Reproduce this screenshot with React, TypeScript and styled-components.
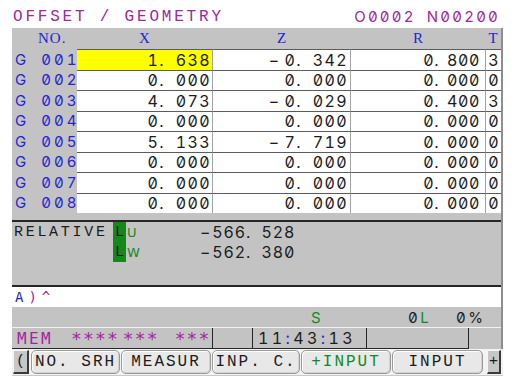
import styled, { createGlobalStyle, css } from "styled-components";

const GlobalStyle = createGlobalStyle`
  html, body {
    margin: 0;
    padding: 0;
    background: #ffffff;
  }
`;

const grey = "#c3c3c3";
const edge = "#8e8e8e";
const magenta = "#a3259f";
const blue = "#2424d6";
const green = "#14891a";
const ink = "#1c1c1c";
const rule = "#262626";

// FANUC style figures: tabular, slashed zero
const figures = css`
  font-family: Inter, "DejaVu Sans", sans-serif;
  font-feature-settings: "zero" 1, "tnum" 1;
  font-weight: 400;
`;

const Screen = styled.div`
  width: 512px;
  height: 383px;
  padding-left: 12px;
  box-sizing: border-box;
  background: #fff;
  overflow: hidden;
`;

const TitleBar = styled.div`
  width: 491px;
  height: 28px;
  padding: 9px 3px 0 1px;
  box-sizing: border-box;
  display: flex;
  justify-content: space-between;
`;

const Title = styled.span<{ $spacing: number; $figures?: boolean }>`
  font-family: "Liberation Mono", monospace;
  font-size: 16px;
  line-height: 16px;
  letter-spacing: ${(p) => p.$spacing}px;
  color: ${magenta};
  white-space: pre;
  ${(p) =>
    p.$figures &&
    css`
      ${figures}
      font-size: 15px;
      word-spacing: 5px;
    `}
`;

const Frame = styled.div`
  width: 491px;
  border-right: 2px solid ${edge};
  box-sizing: border-box;
`;

const Panel = styled(Frame)`
  background: ${grey};
`;

const OffsetGrid = styled.div`
  display: grid;
  grid-template-columns: 65px 136px 138px 135px 15px;
  grid-template-rows: 21px repeat(8, 20.5px);
`;

const HeadCell = styled.div<{ $pad?: number }>`
  font-family: "Liberation Serif", serif;
  font-size: 15px;
  letter-spacing: 1px;
  color: ${blue};
  display: flex;
  align-items: center;
  justify-content: ${(p) => (p.$pad !== undefined ? "flex-start" : "center")};
  padding-left: ${(p) => p.$pad ?? 0}px;
`;

const RowLabel = styled.div`
  display: flex;
  align-items: center;
  padding-left: 3px;
  ${figures}
  font-size: 15px;
  color: ${blue};
`;

const LabelNo = styled.span`
  margin-left: 15px;
  font-size: 15px;
  letter-spacing: 3px;
`;

const ValueCell = styled.div<{
  $hot?: boolean;
  $pad: number;
  $spacing: number;
  $gap: number;
  $tight?: boolean;
}>`
  background: ${(p) => (p.$hot ? "#ffff00" : "#ffffff")};
  border-top: 1px solid #5c5c5c;
  border-right: ${(p) => (p.$tight ? "none" : "1px solid #a2a2a2")};
  box-sizing: border-box;
  display: flex;
  align-items: center;
  justify-content: ${(p) => (p.$tight ? "center" : "flex-end")};
  padding-right: ${(p) => p.$pad}px;
  ${figures}
  font-size: 16px;
  letter-spacing: ${(p) => p.$spacing}px;
  word-spacing: ${(p) => p.$gap}px;
  color: ${ink};
  white-space: pre;
`;

const Minus = styled.span<{ $gap: number }>`
  margin-right: ${(p) => p.$gap}px;
`;

const RelativeGrid = styled.div`
  margin-top: 7px;
  display: grid;
  grid-template-columns: 101px 13px 74px 1fr;
  grid-template-rows: 20px 20px;
  padding-bottom: 23px;
  border-top: 2px solid ${rule};
  border-bottom: 2px solid ${rule};
`;

const RelLabel = styled.div`
  display: flex;
  align-items: center;
  padding-left: 2px;
  font-family: "Liberation Mono", monospace;
  font-size: 15px;
  letter-spacing: 2.7px;
  color: ${ink};
`;

const Lamp = styled.div`
  background: ${green};
  display: flex;
  align-items: center;
  justify-content: center;
  font-family: "Liberation Mono", monospace;
  font-size: 15px;
  color: #111;
`;

const Axis = styled.div`
  display: flex;
  align-items: center;
  padding-left: 1px;
  font-family: "DejaVu Sans", sans-serif;
  font-size: 13px;
  color: ${green};
`;

const RelValue = styled.div`
  display: flex;
  align-items: center;
  ${figures}
  font-size: 16px;
  letter-spacing: 0.9px;
  word-spacing: 5px;
  color: ${ink};
  white-space: pre;
`;

const InputLine = styled(Frame)`
  height: 20px;
  background: #fff;
  display: flex;
  align-items: center;
  padding-left: 3px;
  font-family: "DejaVu Sans Mono", monospace;
  font-size: 14px;
  letter-spacing: 5px;
`;

const Tint = styled.span<{ $c: string }>`
  color: ${(p) => p.$c};
`;

const StatusBlock = styled(Frame)`
  background: ${grey};
`;

const StatusRow = styled.div`
  height: 20px;
  display: grid;
  grid-template-columns: 299px 97px 48px 1fr;
  align-items: center;
  ${figures}
  font-size: 15px;
  letter-spacing: 2.5px;
  color: ${ink};
  white-space: pre;
`;

const ModeRow = styled.div`
  height: 22px;
  border-top: 1px solid #f2f2f2;
  box-sizing: border-box;
  display: flex;
`;

const Slot = styled.div<{ $w: number }>`
  width: ${(p) => p.$w}px;
  border-right: 1px solid ${rule};
  border-bottom: 1px solid ${rule};
  box-sizing: border-box;
  display: flex;
  align-items: center;
  padding-left: 5px;
  ${figures}
  font-size: 16px;
  letter-spacing: 3.4px;
  color: ${ink};
  white-space: pre;
`;

const Mode = styled.span<{ $gap: number; $big?: boolean }>`
  margin-left: ${(p) => p.$gap}px;
  font-family: "DejaVu Sans Mono", monospace;
  font-size: ${(p) => (p.$big ? 18 : 16)}px;
  color: ${magenta};
  letter-spacing: ${(p) => (p.$big ? 1.1 : 2.4)}px;
`;

const SoftKeyBar = styled.div`
  width: 491px;
  height: 27px;
  padding: 1px 0 1px 1px;
  box-sizing: border-box;
  display: flex;
  gap: 1px;
  background: #f3f3f3;
  border-bottom: 1px solid #c9c9c9;
`;

const SoftKey = styled.div<{ $w: number; $lit?: boolean }>`
  width: ${(p) => p.$w}px;
  border: 1px solid #9a9a9a;
  border-radius: 5px;
  box-shadow: inset 1px 1px 0 #ffffff, inset -1px -1px 0 #d2d2d2;
  background: #e8e8e8;
  box-sizing: border-box;
  display: flex;
  align-items: center;
  justify-content: center;
  font-family: "Liberation Mono", monospace;
  font-size: 16px;
  letter-spacing: 2px;
  color: ${(p) => (p.$lit ? green : ink)};
  white-space: pre;
`;

const SideKey = styled.div<{ $w: number; $before: number; $after: number }>`
  width: ${(p) => p.$w}px;
  margin-left: ${(p) => p.$before}px;
  margin-right: ${(p) => p.$after}px;
  background: #c7c7c7;
  border-top: 1px solid #f6f6f6;
  border-left: 1px solid #f6f6f6;
  border-right: 2px solid #3a3a3a;
  border-bottom: 2px solid #3a3a3a;
  box-sizing: border-box;
  display: flex;
  align-items: center;
  justify-content: center;
  font-family: "Liberation Mono", monospace;
  font-size: 15px;
  color: ${ink};
`;

type Offset = { x: string; z: string; r: string; t: string };

const offsets: Offset[] = [
  { x: "1. 638", z: "−0. 342", r: "0. 800", t: "3" },
  { x: "0. 000", z: "0. 000", r: "0. 000", t: "0" },
  { x: "4. 073", z: "−0. 029", r: "0. 400", t: "3" },
  { x: "0. 000", z: "0. 000", r: "0. 000", t: "0" },
  { x: "5. 133", z: "−7. 719", r: "0. 000", t: "0" },
  { x: "0. 000", z: "0. 000", r: "0. 000", t: "0" },
  { x: "0. 000", z: "0. 000", r: "0. 000", t: "0" },
  { x: "0. 000", z: "0. 000", r: "0. 000", t: "0" },
];

const Num = ({ v, gap = 5 }: { v: string; gap?: number }) =>
  v.startsWith("−") || v.startsWith("-") ? (
    <>
      <Minus $gap={gap}>{v[0]}</Minus>
      {v.slice(1)}
    </>
  ) : (
    <>{v}</>
  );

const softKeys = [
  { label: "NO. SRH", w: 89 },
  { label: "MEASUR", w: 90 },
  { label: "INP. C.", w: 88 },
  { label: "+INPUT", w: 90, lit: true },
  { label: "INPUT", w: 91 },
];

export default function App() {
  return (
    <>
      <GlobalStyle />
      <Screen>
        <TitleBar>
          <Title $spacing={2.8}>OFFSET / GEOMETRY</Title>
          <Title $spacing={2.2} $figures>
            O0002 N00200
          </Title>
        </TitleBar>

        <Panel>
          <OffsetGrid>
            <HeadCell $pad={26}>NO.</HeadCell>
            <HeadCell>X</HeadCell>
            <HeadCell>Z</HeadCell>
            <HeadCell>R</HeadCell>
            <HeadCell>T</HeadCell>
            {offsets.map((o, i) => (
              <Row key={i} no={i + 1} o={o} />
            ))}
          </OffsetGrid>

          <RelativeGrid>
            <RelLabel>RELATIVE</RelLabel>
            <Lamp>L</Lamp>
            <Axis>U</Axis>
            <RelValue>
              <Num v="−566. 528" gap={1} />
            </RelValue>
            <div />
            <Lamp>L</Lamp>
            <Axis>W</Axis>
            <RelValue>
              <Num v="−562. 380" gap={1} />
            </RelValue>
          </RelativeGrid>
        </Panel>

        <InputLine>
          <Tint $c={blue}>A</Tint>
          <Tint $c={magenta}>)^</Tint>
        </InputLine>

        <StatusBlock>
          <StatusRow>
            <span />
            <Tint $c={green}>S</Tint>
            <span>
              0<Tint $c={green}>L</Tint>
            </span>
            <span>0%</span>
          </StatusRow>
          <ModeRow>
            <Slot $w={201}>
              <Mode $gap={0}>MEM</Mode>
              <Mode $gap={18} $big>
                ****
              </Mode>
              <Mode $gap={4} $big>
                ***
              </Mode>
              <Mode $gap={16} $big>
                ***
              </Mode>
            </Slot>
            <Slot $w={40} />
            <Slot $w={114}>
              11<Tint $c={blue}>:</Tint>43<Tint $c={blue}>:</Tint>13
            </Slot>
            <Slot $w={102} />
          </ModeRow>
        </StatusBlock>

        <SoftKeyBar>
          <SideKey $w={16} $before={0} $after={1}>
            (
          </SideKey>
          {softKeys.map((k) => (
            <SoftKey key={k.label} $w={k.w} $lit={k.lit}>
              {k.label}
            </SoftKey>
          ))}
          <SideKey $w={14} $before={3} $after={0}>
            +
          </SideKey>
        </SoftKeyBar>
      </Screen>
    </>
  );
}

function Row({ no, o }: { no: number; o: Offset }) {
  return (
    <>
      <RowLabel>
        G<LabelNo>{String(no).padStart(3, "0")}</LabelNo>
      </RowLabel>
      <ValueCell $hot={no === 1} $pad={1} $spacing={1.4} $gap={5}>
        <Num v={o.x} gap={2} />
      </ValueCell>
      <ValueCell $pad={2} $spacing={1.4} $gap={5}>
        <Num v={o.z} gap={4} />
      </ValueCell>
      <ValueCell $pad={5} $spacing={0.6} $gap={3}>
        <Num v={o.r} />
      </ValueCell>
      <ValueCell $pad={0} $spacing={0} $gap={0} $tight>
        {o.t}
      </ValueCell>
    </>
  );
}
